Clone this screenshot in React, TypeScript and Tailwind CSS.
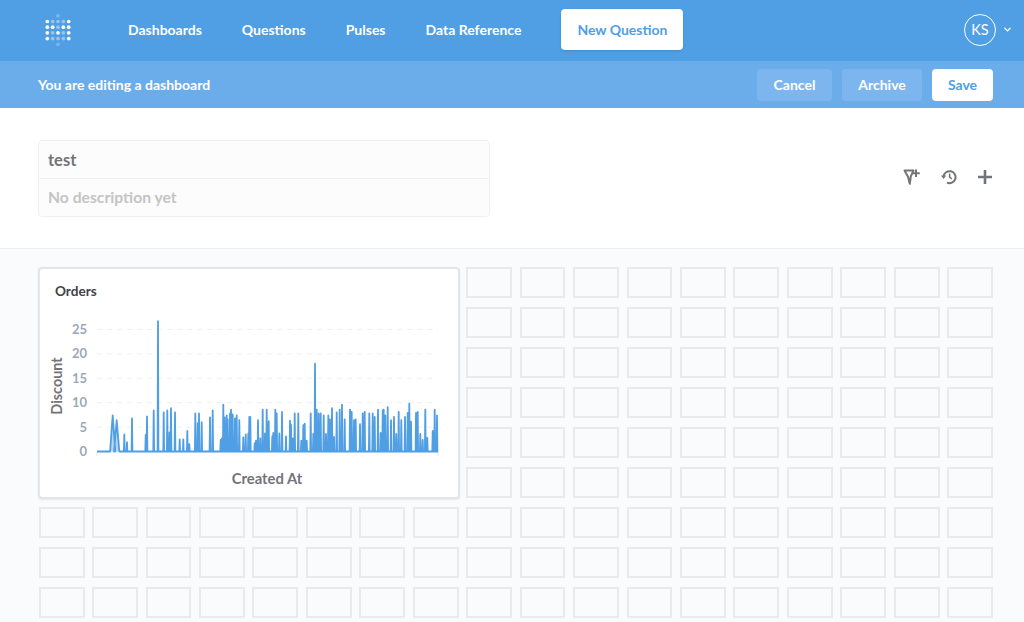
import { ChevronDown } from 'lucide-react';

const peaks: [number, number][] = [
  [112.7, 7.4], [116.7, 6.4], [124.3, 3.5], [127, 1.9], [132, 6.8], [145.7, 3.4], [147, 7.2], [153.7, 8.4], [158, 26.7], [163.7, 8],
  [167.3, 8.4], [169.5, 3.9], [171, 8.9], [175, 8], [179.7, 2.5], [183.3, 2.5], [187.3, 4.2], [189.3, 1.5], [195.3, 7.8], [197.7, 5.8],
  [199, 7.8], [201.7, 6], [210, 7], [212.7, 8.4], [220.7, 2.4], [222, 2.7], [223.3, 9.6], [224.7, 7], [226.7, 7.4], [227.7, 6.6],
  [230, 7.8], [231, 8.6], [232.7, 7.6], [235, 6.8], [236.7, 7.4], [239.3, 6.4], [243.3, 2.9], [245.7, 3.5], [248.3, 3.7], [249.3, 7.1],
  [250.3, 7.1], [254.7, 1.7], [256, 2.2], [258, 6.4], [260.3, 2.7], [262.7, 8.6], [265, 3.7], [266.7, 8.6], [268.7, 6.2], [272.3, 3.1],
  [273.3, 3.8], [275.3, 8.6], [276.7, 7.8], [279.3, 3.7], [282, 8.1], [286, 3.1], [290, 6.3], [291, 5.5], [292.7, 2.7], [294.7, 7.8],
  [298.3, 7.8], [301.3, 2.2], [303.3, 5.4], [304.7, 5.7], [306.7, 2.2], [310.7, 7.8], [313.3, 3.6], [315, 18], [316.7, 8.6], [318.7, 7.8],
  [320.7, 7.8], [323.7, 7.4], [326, 3.6], [328.3, 7.4], [330, 6.6], [332, 8.9], [334, 3], [336.7, 8], [339.7, 8.6], [342, 9.6],
  [344.7, 6.6], [350, 8.6], [351.7, 8.1], [354, 6.4], [355.7, 6.6], [360, 5.6], [362.7, 7.8], [364.7, 8.1], [369.3, 7.8], [372.7, 7.8],
  [374.7, 7.1], [378, 8.6], [380.7, 3.8], [382.7, 8.4], [383.7, 8.6], [385.3, 7.4], [387.7, 9.1], [391, 6.4], [394, 7.1], [396.3, 3.6],
  [398.7, 8.1], [401.3, 6.4], [405, 7.1], [407.7, 7.9], [409.3, 9.8], [411, 6.1], [416, 7.9], [417.7, 8.1], [420.3, 3.6], [422.7, 2.4],
  [425.3, 8.6], [427.3, 2.8], [432.7, 4.2], [434.7, 8.6], [437, 7.4],
];

const chartX = 30;
const chartY = 310;
const baseY = 451.5;
const yOf = (v: number) => baseY - v * 4.88;

const linePoints = (() => {
  const pts: string[] = [`${97 - chartX},${baseY - chartY}`];
  peaks.forEach(([x, v], i) => {
    const next = peaks[i + 1];
    const spread = i < 2 ? 2.6 : 0.4;
    pts.push(`${x - chartX - spread},${baseY - chartY}`);
    pts.push(`${x - chartX},${yOf(v) - chartY}`);
    if (!next || next[0] - x > 1.2) pts.push(`${x - chartX + spread},${baseY - chartY}`);
  });
  pts.push(`${438 - chartX},${baseY - chartY}`);
  return pts.join(' ');
})();

const ticks = [0, 5, 10, 15, 20, 25];

function Chart() {
  return (
    <svg width="422" height="180" className="absolute left-[-10px] top-[41px] block overflow-visible">
      {ticks.slice(1).map((t) => (
        <line key={t} x1={67} x2={408} y1={yOf(t) - chartY} y2={yOf(t) - chartY} stroke="#efefef" strokeDasharray="5 5" />
      ))}
      <line x1={67} x2={67} y1={141} y2={146} stroke="#e4e4e4" />
      <line x1={408} x2={408} y1={141} y2={146} stroke="#e4e4e4" />
      <polygon points={linePoints} fill="#509EE3" fillOpacity={0.4} />
      <polyline points={linePoints} fill="none" stroke="#509EE3" strokeWidth={1.8} strokeLinejoin="round" />
      {ticks.map((t) => (
        <text key={t} x={57} y={yOf(t) - chartY + 4.5} textAnchor="end" fontSize={13} fontWeight={700} fill="#9aa9bb">
          {t}
        </text>
      ))}
      <text transform="translate(32 76) rotate(-90)" textAnchor="middle" fontSize={14.4} fontWeight={700} fill="#727479">
        Discount
      </text>
      <text x={237} y={174} textAnchor="middle" fontSize={14.8} fontWeight={700} fill="#727479">
        Created At
      </text>
    </svg>
  );
}

// dots of the mark: [col, row, opacity]
const logoDots: [number, number, number][] = [
  [2, 0, 0.25],
  [0, 1, 1], [1, 1, 0.4], [2, 1, 0.4], [3, 1, 0.4], [4, 1, 1],
  [0, 2, 1], [1, 2, 1], [2, 2, 0.4], [3, 2, 1], [4, 2, 1],
  [0, 3, 1], [1, 3, 0.4], [2, 3, 1], [3, 3, 0.4], [4, 3, 1],
  [0, 4, 1], [1, 4, 0.4], [2, 4, 0.4], [3, 4, 0.4], [4, 4, 1],
  [2, 5, 0.25],
];

function Logo() {
  return (
    <svg width="26" height="32" viewBox="0 0 26 32">
      {logoDots.map(([c, r, o]) => (
        <circle key={`${c}-${r}`} cx={2.3 + c * 5.35} cy={1.8 + r * 5.69} r={1.85} fill="#fff" fillOpacity={o} />
      ))}
    </svg>
  );
}

function FilterPlus() {
  return (
    <svg width="18" height="18" viewBox="0 0 18 18" fill="none" stroke="#727479" strokeWidth="2">
      <path d="M1.5 2.5 H10.5 L7.8 8.4 L6.8 15.8 L5 8.8 Z" strokeLinejoin="round" />
      <path d="M13 1.5 V9 M9.4 5.2 H16.8" />
    </svg>
  );
}

function HistoryIcon() {
  return (
    <svg width="16" height="16" viewBox="0 0 16 16" fill="none" stroke="#727479" strokeWidth="2">
      <path d="M2.6 7.5 A6 6 0 1 1 6 13.6" />
      <path d="M0 6.5 H5.2 L2.6 10 Z" fill="#727479" stroke="none" />
      <path d="M8.6 4.4 V8.2 L10.8 9.8" strokeWidth="1.5" />
    </svg>
  );
}

function PlusIcon() {
  return (
    <svg width="16" height="16" viewBox="0 0 16 16" fill="none" stroke="#727479" strokeWidth="2.6">
      <path d="M8 1 V15 M1 8 H15" />
    </svg>
  );
}

const navLinks = ['Dashboards', 'Questions', 'Pulses', 'Data Reference'];
const emptyCells = Array.from({ length: 114 }, (_, i) => i);

export default function App() {
  return (
    <div className="h-[622px] overflow-hidden bg-white font-['Lato','Noto_Sans',sans-serif]">
      <header className="flex h-[61px] items-center bg-[#509EE3] pb-[2px] pl-[45px] pr-[11px]">
        <Logo />
        <nav className="ml-[57px] flex items-center gap-[40px] text-[14px] font-bold text-white">
          {navLinks.map((l) => (
            <a key={l}>{l}</a>
          ))}
        </nav>
        <button className="ml-[40px] h-[41px] rounded-[4px] bg-white px-[16px] text-[14px] font-bold text-[#509EE3] shadow-sm">
          New Question
        </button>
        <div className="ml-auto flex items-center gap-[6px] text-white">
          <div className="flex h-[32px] w-[32px] items-center justify-center rounded-full border border-white text-[14.5px]">KS</div>
          <ChevronDown size={11} strokeWidth={3} />
        </div>
      </header>

      <div className="flex h-[47px] items-center justify-between bg-[#6BADEB] pl-[38px] pr-[31px]">
        <span className="text-[14px] font-bold text-white">You are editing a dashboard</span>
        <div className="flex items-center gap-[10px] text-[14px] font-bold">
          <button className="h-[32px] w-[75px] rounded-[4px] bg-[#7DB6EE] text-white">Cancel</button>
          <button className="h-[32px] w-[80px] rounded-[4px] bg-[#7DB6EE] text-white">Archive</button>
          <button className="h-[32px] w-[61px] rounded-[4px] bg-white text-[#509EE3]">Save</button>
        </div>
      </div>

      <section className="flex h-[141px] items-center justify-between border-b border-[#f0f0f0] pl-[38px] pr-[31px]">
        <div className="w-[452px] rounded-[4px] border border-[#f0f0f0] bg-[#fcfcfc] font-bold">
          <div className="flex h-[38px] items-center border-b border-[#f0f0f0] px-[9px] pt-[2px] text-[16.5px] text-[#727479]">test</div>
          <div className="flex h-[37px] items-center px-[9px] pt-[2px] text-[15.7px] text-[#c4c4c4]">No description yet</div>
        </div>
        <div className="flex items-center gap-[20px] pb-[2px]">
          <FilterPlus />
          <HistoryIcon />
          <PlusIcon />
        </div>
      </section>

      <main className="h-[373px] bg-[#F9FBFC] pl-[38.7px] pr-[31px] pt-[18px]">
        <div className="grid grid-cols-[repeat(18,minmax(0,1fr))] auto-rows-[31px] gap-x-[7.6px] gap-y-[9px]">
          <div className="relative col-span-8 row-span-6 -mb-[1px] -ml-[0.7px] -mr-[1px] rounded-[4px] border-2 border-[#e3e5e7] bg-white shadow-[0_1px_2px_rgba(0,0,0,0.08)]">
            <h3 className="pl-[15px] pt-[12px] text-[13.6px] font-bold text-[#3f4145]">Orders</h3>
            <Chart />
          </div>
          {emptyCells.map((i) => (
            <div key={i} className="border-2 border-[#e9eaec] bg-[#F9FBFC]" />
          ))}
        </div>
      </main>
    </div>
  );
}
